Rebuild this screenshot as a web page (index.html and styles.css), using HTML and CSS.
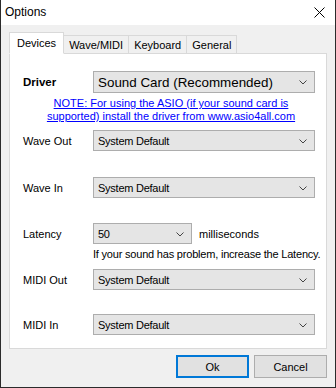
FILE: index.html
```html
<!DOCTYPE html>
<html lang="en">
<head>
    <meta charset="UTF-8">
    <title>Options</title>
    <link rel="stylesheet" href="styles.css">
</head>
<body>
    <div class="window">
        <div class="title-bar">
            <span class="title">Options</span>
            <svg class="close" width="11" height="11" viewBox="0 0 11 11">
                <path d="M0.5 0.5 L10.5 10.5 M10.5 0.5 L0.5 10.5" stroke="#000" stroke-width="1" fill="none"/>
            </svg>
        </div>

        <div class="dialog-body">
            <div class="tabs">
                <div class="tab active">Devices</div>
                <div class="tab">Wave/MIDI</div>
                <div class="tab">Keyboard</div>
                <div class="tab">General</div>
            </div>

            <div class="panel">
                <div class="row row-driver">
                    <span class="label bold">Driver</span>
                    <div class="combo combo-big">
                        <span>Sound Card (Recommended)</span>
                        <svg class="chevron" width="8" height="5" viewBox="0 0 8 5"><path d="M0.5 0.5 L4 4 L7.5 0.5" stroke="#444" fill="none"/></svg>
                    </div>
                </div>
                <p class="note">NOTE: For using the ASIO (if your sound card is<br>supported) install the driver from www.asio4all.com</p>

                <div class="row row-waveout">
                    <span class="label">Wave Out</span>
                    <div class="combo">
                        <span>System Default</span>
                        <svg class="chevron" width="8" height="5" viewBox="0 0 8 5"><path d="M0.5 0.5 L4 4 L7.5 0.5" stroke="#444" fill="none"/></svg>
                    </div>
                </div>

                <div class="row row-wavein">
                    <span class="label">Wave In</span>
                    <div class="combo">
                        <span>System Default</span>
                        <svg class="chevron" width="8" height="5" viewBox="0 0 8 5"><path d="M0.5 0.5 L4 4 L7.5 0.5" stroke="#444" fill="none"/></svg>
                    </div>
                </div>

                <div class="row row-latency">
                    <span class="label">Latency</span>
                    <div class="latency">
                        <div class="combo combo-small">
                            <span>50</span>
                            <svg class="chevron" width="8" height="5" viewBox="0 0 8 5"><path d="M0.5 0.5 L4 4 L7.5 0.5" stroke="#444" fill="none"/></svg>
                        </div>
                        <span class="unit">milliseconds</span>
                    </div>
                </div>
                <p class="hint">If your sound has problem, increase the Latency.</p>

                <div class="row row-midiout">
                    <span class="label">MIDI Out</span>
                    <div class="combo">
                        <span>System Default</span>
                        <svg class="chevron" width="8" height="5" viewBox="0 0 8 5"><path d="M0.5 0.5 L4 4 L7.5 0.5" stroke="#444" fill="none"/></svg>
                    </div>
                </div>

                <div class="row row-midiin">
                    <span class="label">MIDI In</span>
                    <div class="combo">
                        <span>System Default</span>
                        <svg class="chevron" width="8" height="5" viewBox="0 0 8 5"><path d="M0.5 0.5 L4 4 L7.5 0.5" stroke="#444" fill="none"/></svg>
                    </div>
                </div>
            </div>

            <div class="buttons">
                <button class="button default">Ok</button>
                <button class="button">Cancel</button>
            </div>
        </div>
    </div>
</body>
</html>
```

FILE: styles.css
```css
body {
    margin: 0;
    font-family: "Liberation Sans", Arial, sans-serif;
    font-size: 11px;
    color: #000;
    background-color: #f0f0f0;
}
.window {
    width: 334px;
    height: 387px;
    border: 1px solid #2b2b2b;
    border-top: none;
    background-color: #f0f0f0;
    display: flex;
    flex-direction: column;
}
.title-bar {
    height: 25px;
    background-color: #ffffff;
    display: flex;
    align-items: center;
    justify-content: space-between;
    padding: 0 10px 0 4px;
}
.title {
    font-size: 12px;
    margin-top: -1px;
}
.close {
    margin-top: -1px;
}
.dialog-body {
    padding: 8px 8px 0 8px;
}
.tabs {
    display: flex;
    align-items: flex-end;
    height: 20px;
    position: relative;
    z-index: 1;
}
.tab {
    height: 17px;
    line-height: 18px;
    padding: 0 5px;
    border: 1px solid #d9d9d9;
    border-bottom: none;
    margin-left: -1px;
    background-color: #f0f0f0;
}
.tab.active {
    height: 20px;
    line-height: 21px;
    margin-left: 0;
    padding: 0 7px;
    background-color: #ffffff;
    border-bottom: 1px solid #ffffff;
    margin-bottom: -1px;
}
.panel {
    height: 294px;
    background-color: #ffffff;
    border: 1px solid #d9d9d9;
    padding: 0 11px 0 13px;
}
.row {
    display: flex;
    align-items: center;
    height: 21px;
}
.label {
    width: 70px;
}
.bold {
    font-weight: bold;
    font-size: 11.5px;
}
.combo {
    width: 209px;
    height: 19px;
    border: 1px solid #adadad;
    background-color: #e5e5e5;
    display: flex;
    align-items: center;
    justify-content: space-between;
    padding: 0 7px 0 4px;
    letter-spacing: -0.25px;
}
.combo-big {
    height: 20px;
    font-size: 13.4px;
    letter-spacing: 0;
}
.row-driver {
    height: 22px;
    margin-top: 17px;
}
.combo-small {
    width: 86px;
}
.chevron {
    margin-top: 1px;
}
.note {
    height: 26px;
    margin: 4px 0 0 0;
    text-align: center;
    color: #0000ff;
    text-decoration: underline;
    line-height: 13px;
    padding-left: 4px;
}
.row-waveout {
    margin-top: 7px;
}
.row-wavein {
    margin-top: 26px;
}
.row-latency {
    margin-top: 25px;
}
.latency {
    display: flex;
    align-items: center;
}
.unit {
    margin-left: 7px;
}
.hint {
    height: 14px;
    margin: 3px 0 0 70px;
    line-height: 14px;
    white-space: nowrap;
    letter-spacing: -0.2px;
}
.row-midiout {
    margin-top: 8px;
}
.row-midiin {
    margin-top: 24px;
}
.buttons {
    display: flex;
    justify-content: flex-end;
    gap: 5px;
    margin-top: 6px;
}
.button {
    width: 73px;
    height: 23px;
    font-family: "Liberation Sans", Arial, sans-serif;
    font-size: 11px;
    background-color: #e1e1e1;
    border: 1px solid #adadad;
    padding: 0;
    color: #000;
}
.button.default {
    border: 2px solid #0078d7;
}
```
